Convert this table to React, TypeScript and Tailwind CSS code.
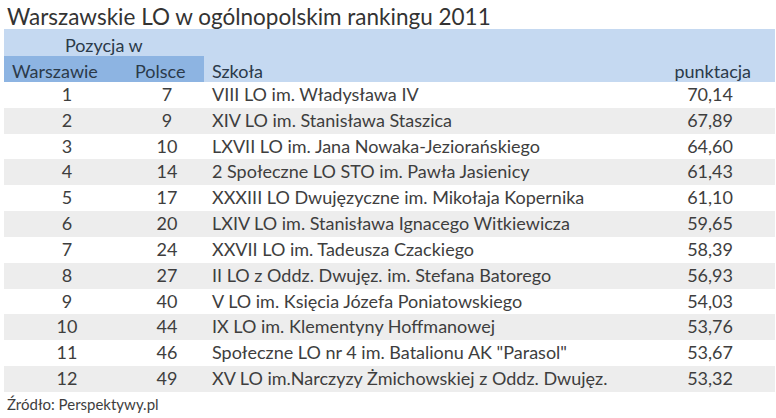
import React from "react";

const rows: [number, number, string, string][] = [
  [1, 7, "VIII LO im. Władysława IV", "70,14"],
  [2, 9, "XIV LO im. Stanisława Staszica", "67,89"],
  [3, 10, "LXVII LO im. Jana Nowaka-Jeziorańskiego", "64,60"],
  [4, 14, "2 Społeczne LO STO im. Pawła Jasienicy", "61,43"],
  [5, 17, "XXXIII LO Dwujęzyczne im. Mikołaja Kopernika", "61,10"],
  [6, 20, "LXIV LO im. Stanisława Ignacego Witkiewicza", "59,65"],
  [7, 24, "XXVII LO im. Tadeusza Czackiego", "58,39"],
  [8, 27, "II LO z Oddz. Dwujęz. im. Stefana Batorego", "56,93"],
  [9, 40, "V LO im. Księcia Józefa Poniatowskiego", "54,03"],
  [10, 44, "IX LO im. Klementyny Hoffmanowej", "53,76"],
  [11, 46, "Społeczne LO nr 4 im. Batalionu AK \"Parasol\"", "53,67"],
  [12, 49, "XV LO im.Narczyzy Żmichowskiej z Oddz. Dwujęz.", "53,32"],
];

export default function App() {
  return (
    <div className="w-[776px] h-[418px] bg-white overflow-hidden font-['Lato',sans-serif] text-[#3e3e3e]">
      <div className="h-[29px] pt-[5px] pl-[7px] text-[22.5px] leading-[24px] text-[#333333] whitespace-nowrap">
        Warszawskie LO w ogólnopolskim rankingu 2011
      </div>
      <div className="ml-[4px] w-[771px] bg-[#c5d9f1] text-[#2b3a4a] text-[18px]">
        <div className="h-[27px] flex items-end pb-[1px] leading-[20px]">
          <div className="pl-[61px]">Pozycja w</div>
        </div>
        <div className="h-[26px] flex items-stretch leading-[20px]">
          <div className="w-[200px] bg-[#8db4e2] flex items-end pb-[1px]">
            <div className="w-[126px] pl-[8px]">Warszawie</div>
            <div className="w-[74px] pl-[5px]">Polsce</div>
          </div>
          <div className="flex-1 flex items-end pb-[1px] pl-[8px]">Szkoła</div>
          <div className="w-[115px] flex items-end justify-end pb-[1px] pr-[24px]">punktacja</div>
        </div>
      </div>
      <div className="ml-[4px] w-[771px] text-[18px] leading-[24px]">
        {rows.map(([w, p, s, v], i) => (
          <div
            key={w}
            className={`h-[25.83px] flex items-start whitespace-nowrap ${i % 2 === 1 ? "bg-[#ededed]" : "bg-white"}`}
          >
            <div className="w-[126px] text-center">{w}</div>
            <div className="w-[74px] text-center">{p}</div>
            <div className="flex-1 pl-[8px]">{s}</div>
            <div className="w-[115px] text-right pr-[42px]">{v}</div>
          </div>
        ))}
      </div>
      <div className="pl-[7px] pt-[3px] text-[15px] leading-[18px] text-[#3e3e3e]">Źródło: Perspektywy.pl</div>
    </div>
  );
}
